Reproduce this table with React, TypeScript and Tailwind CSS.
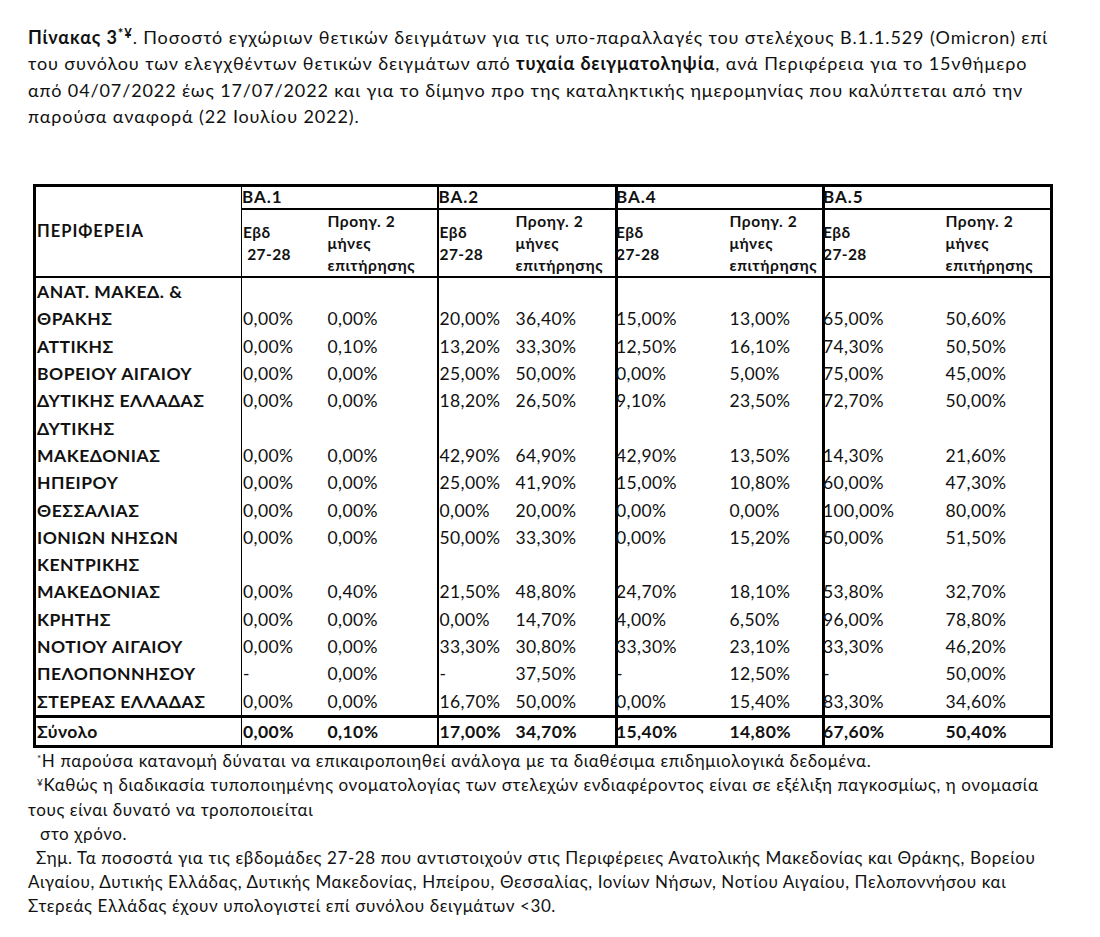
import React from 'react';

// Πίνακας 3 – ποσοστά υπο-παραλλαγών Omicron ανά Περιφέρεια
const groups = ['ΒΑ.1', 'ΒΑ.2', 'ΒΑ.4', 'ΒΑ.5'];

const rows: { name: string[]; v: string[] }[] = [
  { name: ['ΑΝΑΤ. ΜΑΚΕΔ. &', 'ΘΡΑΚΗΣ'], v: ['0,00%', '0,00%', '20,00%', '36,40%', '15,00%', '13,00%', '65,00%', '50,60%'] },
  { name: ['ΑΤΤΙΚΗΣ'], v: ['0,00%', '0,10%', '13,20%', '33,30%', '12,50%', '16,10%', '74,30%', '50,50%'] },
  { name: ['ΒΟΡΕΙΟΥ ΑΙΓΑΙΟΥ'], v: ['0,00%', '0,00%', '25,00%', '50,00%', '0,00%', '5,00%', '75,00%', '45,00%'] },
  { name: ['ΔΥΤΙΚΗΣ ΕΛΛΑΔΑΣ'], v: ['0,00%', '0,00%', '18,20%', '26,50%', '9,10%', '23,50%', '72,70%', '50,00%'] },
  { name: ['ΔΥΤΙΚΗΣ', 'ΜΑΚΕΔΟΝΙΑΣ'], v: ['0,00%', '0,00%', '42,90%', '64,90%', '42,90%', '13,50%', '14,30%', '21,60%'] },
  { name: ['ΗΠΕΙΡΟΥ'], v: ['0,00%', '0,00%', '25,00%', '41,90%', '15,00%', '10,80%', '60,00%', '47,30%'] },
  { name: ['ΘΕΣΣΑΛΙΑΣ'], v: ['0,00%', '0,00%', '0,00%', '20,00%', '0,00%', '0,00%', '100,00%', '80,00%'] },
  { name: ['ΙΟΝΙΩΝ ΝΗΣΩΝ'], v: ['0,00%', '0,00%', '50,00%', '33,30%', '0,00%', '15,20%', '50,00%', '51,50%'] },
  { name: ['ΚΕΝΤΡΙΚΗΣ', 'ΜΑΚΕΔΟΝΙΑΣ'], v: ['0,00%', '0,40%', '21,50%', '48,80%', '24,70%', '18,10%', '53,80%', '32,70%'] },
  { name: ['ΚΡΗΤΗΣ'], v: ['0,00%', '0,00%', '0,00%', '14,70%', '4,00%', '6,50%', '96,00%', '78,80%'] },
  { name: ['ΝΟΤΙΟΥ ΑΙΓΑΙΟΥ'], v: ['0,00%', '0,00%', '33,30%', '30,80%', '33,30%', '23,10%', '33,30%', '46,20%'] },
  { name: ['ΠΕΛΟΠΟΝΝΗΣΟΥ'], v: ['-', '0,00%', '-', '37,50%', '-', '12,50%', '-', '50,00%'] },
  { name: ['ΣΤΕΡΕΑΣ ΕΛΛΑΔΑΣ'], v: ['0,00%', '0,00%', '16,70%', '50,00%', '0,00%', '15,40%', '83,30%', '34,60%'] },
];

const total = ['0,00%', '0,10%', '17,00%', '34,70%', '15,40%', '14,80%', '67,60%', '50,40%'];

// αριστερό περίγραμμα κάθε ομάδας (ΒΑ.1 λεπτό, ΒΑ.4/ΒΑ.5 παχύ)
const groupBorder = ['border-l', 'border-l-2', 'border-l-[3px]', 'border-l-[3px]'];
const subPad = ['pl-[1px]', 'pl-0', 'pl-[1px]', 'pl-0', 'pl-0', 'pl-0', 'pl-0', 'pl-0'];
const subShift = ['', '', '', '', '-ml-[2px]', '', '-ml-[2px]', ''];

function cellClass(i: number) {
  return i % 2 === 0 ? `${groupBorder[i / 2]} border-black ${subPad[i]}` : subPad[i];
}

export default function App() {
  return (
    <div className="w-[1100px] min-h-[937px] bg-white text-black font-['Lato','Open_Sans','Noto_Sans',sans-serif]">
      {/* Τίτλος */}
      <div className="pl-[28px] pt-[24px] text-[18px] tracking-[0.88px] leading-[26.4px] whitespace-nowrap text-[#111]">
        <div>
          <b>Πίνακας 3<sup className="text-[13px]">*¥</sup></b>. Ποσοστό εγχώριων θετικών δειγμάτων για τις υπο-παραλλαγές του στελέχους Β.1.1.529 (Omicron) επί
        </div>
        <div>
          του συνόλου των ελεγχθέντων θετικών δειγμάτων από <b>τυχαία δειγματοληψία</b>, ανά Περιφέρεια για το 15νθήμερο
        </div>
        <div>από 04/07/2022 έως 17/07/2022 και για το δίμηνο προ της καταληκτικής ημερομηνίας που καλύπτεται από την</div>
        <div>παρούσα αναφορά (22 Ιουλίου 2022).</div>
      </div>

      {/* Πίνακας */}
      <div className="pl-[33px] pt-[54px]">
        <table className="w-[1017px] table-fixed border-collapse border-[3px] border-black text-[#111]">
          <colgroup>
            <col className="w-[207px]" />
            <col className="w-[86px]" />
            <col className="w-[110px]" />
            <col className="w-[78px]" />
            <col className="w-[101px]" />
            <col className="w-[113px]" />
            <col className="w-[94px]" />
            <col className="w-[122px]" />
            <col className="w-[106px]" />
          </colgroup>
          <thead>
            <tr className="h-[24px]">
              <th
                rowSpan={2}
                className="border-b-2 border-black text-left align-middle pl-[1px] text-[16.5px] tracking-[1px] font-bold"
              >
                ΠΕΡΙΦΕΡΕΙΑ
              </th>
              {groups.map((g, gi) => (
                <th
                  key={g}
                  colSpan={2}
                  className={`${groupBorder[gi]} border-b-2 border-black text-left pl-0 text-[17px] tracking-[1px] font-bold leading-[20px]`}
                >
                  <span className={gi > 1 ? '-ml-[2px]' : ''}>{g}</span>
                </th>
              ))}
            </tr>
            <tr className="h-[68px]">
              {groups.map((g, gi) => (
                <React.Fragment key={g}>
                  <th
                    className={`${groupBorder[gi]} border-b-2 border-black text-left align-middle ${subPad[gi * 2]} text-[15.5px] tracking-[0.4px] font-bold leading-[22px]`}
                  >
                    <div className={gi > 1 ? '-ml-[2px]' : ''}>
                      Εβδ
                      <br />
                      {gi === 0 ? '\u00a027-28' : '27-28'}
                    </div>
                  </th>
                  <th
                    className={`border-b-2 border-black text-left align-middle ${subPad[gi * 2 + 1]} text-[15.5px] tracking-[0.6px] font-bold leading-[22px]`}
                  >
                    Προηγ. 2
                    <br />
                    μήνες
                    <br />
                    επιτήρησης
                  </th>
                </React.Fragment>
              ))}
            </tr>
          </thead>
          <tbody className="text-[17.5px] tracking-[0.4px] leading-[27.3px]">
            {rows.map((r) => (
              <tr key={r.name.join(' ')}>
                <td className="pl-[1px] font-bold align-top whitespace-nowrap tracking-[0.5px]">
                  {r.name.map((n) => (
                    <div key={n}>{n}</div>
                  ))}
                </td>
                {r.v.map((v, i) => (
                  <td key={i} className={`${cellClass(i)} align-bottom whitespace-nowrap`}>
                    <span className={subShift[i]}>{v}</span>
                  </td>
                ))}
              </tr>
            ))}
            <tr className="border-t-[3px] border-black h-[29px] font-bold">
              <td className="pl-[1px]">Σύνολο</td>
              {total.map((v, i) => (
                <td key={i} className={`${cellClass(i)} whitespace-nowrap`}>
                  <span className={subShift[i]}>{v}</span>
                </td>
              ))}
            </tr>
          </tbody>
        </table>
      </div>

      {/* Υποσημειώσεις */}
      <div className="pt-[1px] text-[17px] tracking-[0.6px] leading-[24.2px] whitespace-nowrap text-[#111]">
        <div className="pl-[37px]">
          <sup className="text-[10px]">*</sup>Η παρούσα κατανομή δύναται να επικαιροποιηθεί ανάλογα με τα διαθέσιμα επιδημιολογικά δεδομένα.
        </div>
        <div className="pl-[37px]">
          <sup className="text-[10px]">¥</sup>Καθώς η διαδικασία τυποποιημένης ονοματολογίας των στελεχών ενδιαφέροντος είναι σε εξέλιξη παγκοσμίως, η ονομασία
        </div>
        <div className="pl-[28px]">τους είναι δυνατό να τροποποιείται</div>
        <div className="pl-[40px]">στο χρόνο.</div>
        <div className="pl-[36px]">
          Σημ. Τα ποσοστά για τις εβδομάδες 27-28 που αντιστοιχούν στις Περιφέρειες Ανατολικής Μακεδονίας και Θράκης, Βορείου
        </div>
        <div className="pl-[28px]">
          Αιγαίου, Δυτικής Ελλάδας, Δυτικής Μακεδονίας, Ηπείρου, Θεσσαλίας, Ιονίων Νήσων, Νοτίου Αιγαίου, Πελοποννήσου και
        </div>
        <div className="pl-[28px]">Στερεάς Ελλάδας έχουν υπολογιστεί επί συνόλου δειγμάτων &lt;30.</div>
      </div>
    </div>
  );
}
